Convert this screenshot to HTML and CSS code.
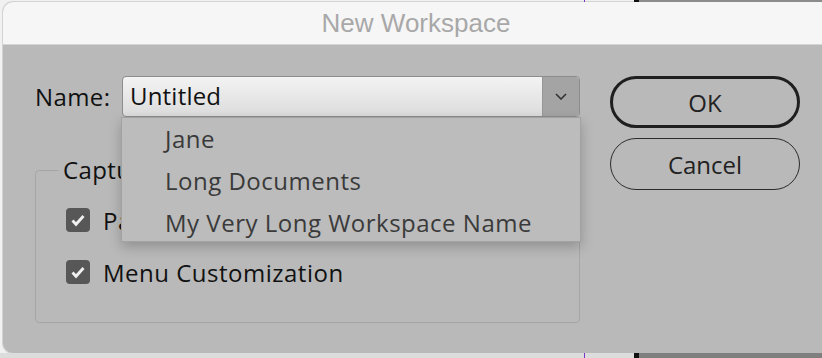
FILE: index.html
```html
<!DOCTYPE html>
<html lang="en">
	<head>
		<meta charset="UTF-8"/>
		<meta name="viewport" content="width=device-width, initial-scale=1.0"/>
		<title>New Workspace</title>
		<link rel="stylesheet" href="styles.css">
	</head>
	<body>
	  <div class="desk">
		<div class="edge edge-top">
		  <span class="e-light"></span><span class="e-purple"></span><span class="e-gap"></span><span class="e-black"></span><span class="e-gray"></span>
		</div>

		<div class="window">
		  <div class="titlebar">New Workspace</div>
		  <div class="content">
			<div class="form">
			  <div class="name-row">
				<label class="name-label">Name:</label>
				<div class="combo">
				  <span class="combo-value">Untitled</span>
				  <span class="combo-btn">
					<svg width="12" height="7" viewBox="0 0 12 7"><path d="M1 1l5 5 5-5" fill="none" stroke="#333" stroke-width="1.6"/></svg>
				  </span>
				  <ul class="menu">
					<li>Jane</li>
					<li>Long Documents</li>
					<li>My Very Long Workspace Name</li>
				  </ul>
				</div>
			  </div>

			  <fieldset class="group">
				<legend>Capture</legend>
				<div class="check-row">
				  <span class="check"><svg width="24" height="24" viewBox="0 0 24 24"><path d="M6.5 12.5l3.5 3.8 7.5-8.3" fill="none" stroke="#f0f0f0" stroke-width="2.8"/></svg></span>
				  <span class="check-label">Panel Locations</span>
				</div>
				<div class="check-row">
				  <span class="check"><svg width="24" height="24" viewBox="0 0 24 24"><path d="M6.5 12.5l3.5 3.8 7.5-8.3" fill="none" stroke="#f0f0f0" stroke-width="2.8"/></svg></span>
				  <span class="check-label">Menu Customization</span>
				</div>
			  </fieldset>
			</div>

			<div class="buttons">
			  <button class="btn btn-default">OK</button>
			  <button class="btn">Cancel</button>
			</div>
		  </div>
		</div>

		<div class="edge edge-bottom">
		  <span class="e-light"></span><span class="e-purple"></span><span class="e-gap"></span><span class="e-black"></span><span class="e-gray"></span>
		</div>
	  </div>
	</body>
</html>
```

FILE: styles.css
```css
* {
  box-sizing: border-box;
}
body {
  margin: 0;
  overflow: hidden;
  font-family: "Open Sans", "Liberation Sans", sans-serif;
  letter-spacing: 0.4px;
}
.desk {
  width: 822px;
  height: 358px;
  overflow: hidden;
  background: #f1f1f1;
}
.edge {
  display: flex;
  height: 2px;
}
.edge-bottom {
  height: 5px;
  background: #dcdcdc;
}
.e-light {
  width: 584px;
}
.e-purple {
  width: 1px;
  background: #7b34c9;
}
.e-gap {
  width: 49px;
}
.e-black {
  width: 5px;
  background: #111;
}
.e-gray {
  flex: 1;
  background: #7f7f7f;
}
.edge-top .e-gray {
  background: #8c8c8c;
}
.window {
  margin-left: 3px;
  width: 840px;
  height: 351px;
  border-radius: 10px;
  background: #b9b9b9;
  overflow: hidden;
  box-shadow: 0 0 0 1px rgba(0, 0, 0, 0.12);
}
.titlebar {
  height: 43px;
  line-height: 42px;
  background: #f6f6f6;
  border-bottom: 1px solid #d6d6d6;
  text-align: center;
  padding-right: 14px;
  font-family: "Liberation Sans", Arial, sans-serif;
  font-size: 26px;
  letter-spacing: 0;
  color: #a8a8a8;
}
.content {
  display: grid;
  grid-template-columns: 545px 190px;
  column-gap: 30px;
  padding: 31px 0 0 32px;
}
.name-row {
  display: flex;
  align-items: center;
  height: 41px;
}
.name-label {
  width: 87px;
  font-size: 24px;
  color: #111;
}
.combo {
  position: relative;
  flex: 1;
  display: flex;
  height: 41px;
  border: 1px solid #8d8d8d;
  border-radius: 4px;
  background: linear-gradient(#f3f3f3, #dcdcdc);
}
.combo-value {
  flex: 1;
  padding-left: 7px;
  line-height: 38px;
  font-size: 24px;
  letter-spacing: 0.2px;
  color: #111;
}
.combo-btn {
  display: flex;
  align-items: center;
  justify-content: center;
  width: 37px;
  background: #a4a4a4;
  border-left: 1px solid #979797;
  border-radius: 0 3px 3px 0;
}
.menu {
  position: absolute;
  top: 40px;
  left: -2px;
  width: 460px;
  height: 125px;
  margin: 0;
  padding: 0;
  list-style: none;
  overflow: hidden;
  background: #bcbcbc;
  border: 1px solid #a2a2a2;
  box-shadow: 0 5px 12px rgba(0, 0, 0, 0.22);
  z-index: 2;
}
.menu li {
  height: 42px;
  line-height: 42px;
  padding-left: 43px;
  font-size: 24px;
  letter-spacing: 0.5px;
  color: #3a3a3a;
}
.group {
  margin: 39px 0 0 0;
  padding: 0 0 32px 30px;
  border: 1px solid #a6a6a6;
  border-radius: 4px;
}
.group legend {
  margin-left: -7px;
  padding: 0 4px;
  line-height: 28px;
  font-size: 24px;
  color: #111;
}
.check-row {
  display: flex;
  align-items: center;
  gap: 13px;
  height: 36px;
  margin-top: 16px;
}
.check-row:first-of-type {
  margin-top: 18px;
}
.check {
  width: 24px;
  height: 24px;
  border-radius: 4px;
  background: #575757;
}
.check svg {
  display: block;
}
.check-label {
  font-size: 24px;
  letter-spacing: 0.5px;
  color: #111;
}
.buttons {
  display: flex;
  flex-direction: column;
  gap: 10px;
}
.btn {
  height: 52px;
  border: 1.5px solid #2c2c2c;
  border-radius: 26px;
  background: transparent;
  font-family: "Open Sans", "Liberation Sans", sans-serif;
  font-size: 24px;
  color: #222;
  padding: 0;
}
.btn-default {
  border: 3.5px solid #1f1f1f;
}
```
